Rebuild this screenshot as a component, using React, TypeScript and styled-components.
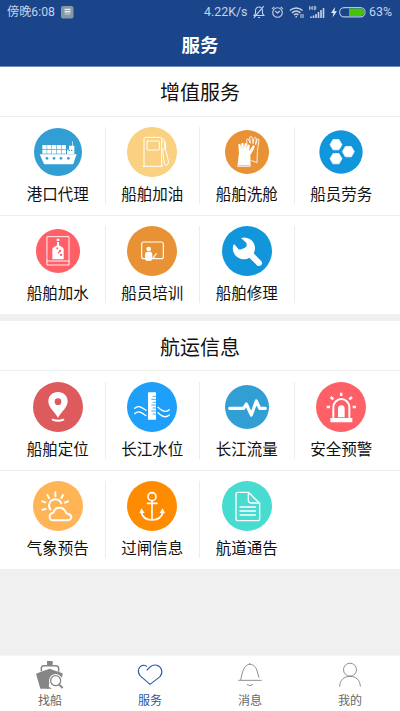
import React from 'react';
import styled, { createGlobalStyle } from 'styled-components';

const GlobalStyle = createGlobalStyle`
  * { box-sizing: border-box; }
  body {
    margin: 0;
    background: #f0f0f0;
    font-family: Roboto, "Noto Sans CJK SC", sans-serif;
  }
`;

const Screen = styled.div`
  display: flex;
  flex-direction: column;
  width: 400px;
  height: 711px;
  background: #f0f0f0;
  overflow: hidden;
`;

const Header = styled.header`
  height: 67px;
  flex: none;
  background: #1b458a;
  border-bottom: 1px solid #6e8bb8;
  color: #fff;
`;

const StatusBar = styled.div`
  height: 24px;
  display: flex;
  align-items: center;
  justify-content: space-between;
  padding: 0 7px;
  font-size: 12px;
  line-height: 24px;
  color: #c5d2e8;
`;

const StatusGroup = styled.div`
  display: flex;
  align-items: center;
  white-space: nowrap;
`;

const Clock = styled.span`
  font-size: 12.2px;
  margin-right: 6px;
`;

const Speed = styled.span`
  width: 43px;
  margin-right: 6px;
  font-size: 12.4px;
`;

const Percent = styled.span`
  width: 24px;
  font-size: 12.4px;
`;

const StatusIcon = styled.svg<{ $w: number; $gap: number }>`
  width: ${p => p.$w}px;
  height: 14px;
  margin-right: ${p => p.$gap}px;
  flex: none;
`;

const Title = styled.h1`
  margin: 0;
  height: 42px;
  line-height: 44px;
  text-align: center;
  font-size: 18.5px;
  font-weight: 700;
`;

const Section = styled.section`
  flex: none;
  margin-bottom: 7px;
  background: #fff;
`;

const SectionTitle = styled.h2<{ $leading: number }>`
  margin: 0;
  height: 50px;
  line-height: ${p => p.$leading}px;
  border-bottom: 1px solid #eeeeee;
  text-align: center;
  font-size: 20px;
  font-weight: 400;
  color: #111;
`;

const Row = styled.div<{ $top: number }>`
  display: grid;
  grid-template-columns: repeat(4, 94.5px);
  height: ${p => p.$top + 88}px;
  padding: ${p => p.$top}px 11px 0;
  & + & {
    height: 99px;
    border-top: 1px solid #eeeeee;
  }
`;

const Cell = styled.div<{ $line: boolean }>`
  display: flex;
  flex-direction: column;
  align-items: center;
  height: 77px;
  border-right: 1px solid ${p => (p.$line ? '#ececec' : 'transparent')};
`;

const CellIcon = styled.svg`
  width: 50px;
  height: 50px;
  flex: none;
`;

const CellLabel = styled.span`
  margin-top: 7px;
  font-size: 15.5px;
  line-height: 23px;
  white-space: nowrap;
  color: #111;
`;

const TabBar = styled.nav`
  display: grid;
  grid-template-columns: repeat(4, 1fr);
  height: 56px;
  margin-top: auto;
  flex: none;
  background: #fff;
  border-top: 1px solid #f5f5f5;
`;

const Tab = styled.div<{ $active: boolean }>`
  display: flex;
  flex-direction: column;
  align-items: center;
  padding-top: 4px;
  font-size: 12px;
  line-height: 18px;
  color: ${p => (p.$active ? '#2d589f' : '#666')};
`;

const TabIcon = styled.svg`
  width: 30px;
  height: 30px;
  margin-bottom: 2px;
`;

type Item = { label: string; color: string; r: number; art: React.ReactNode };

const hexagon = (cx: number, cy: number, r: number) =>
  [0, 60, 120, 180, 240, 300]
    .map(a => `${cx + r * Math.cos((a * Math.PI) / 180)},${cy + r * Math.sin((a * Math.PI) / 180)}`)
    .join(' ');

const line = { fill: 'none', stroke: '#fff', strokeLinecap: 'round', strokeLinejoin: 'round' } as const;

const services: Item[][] = [
  [
    {
      label: '港口代理', color: '#319fd3', r: 72,
      art: (
        <g fill="#fff">
          {[0, 1, 2, 3, 4].map(i => (
            <g key={i}>
              <rect x={28 + i * 14.5} y="54" width="13" height="12" />
              <rect x={28 + i * 14.5} y="68" width="13" height="12" />
            </g>
          ))}
          <path d="M117 43h2v13h5v25h-22V68h6V56h9z" />
          <path d="M20 82h111l-8 22q-1 8-5 8H36q-4 0-6-8z" />
          <g fill="#319fd3">
            <path d="M107 68h4v4h-4zM114 68h4v4h-4z" />
            {[42, 63, 84, 106].map(x => <circle key={x} cx={x} cy="94" r="4" />)}
          </g>
        </g>
      ),
    },
    {
      label: '船舶加油', color: '#fad081', r: 75,
      art: (
        <g {...line} strokeWidth="3">
          <path d="M51 117V35q0-4 4-4h45q4 0 4 4v82M48 118h58" />
          <rect x="60" y="42" width="37" height="27" rx="2" />
          <path d="M104 33q10 5 12 14v21l8 34q1 13-7 13-6 0-6-10l-4-40M104 42l8 5v20" />
        </g>
      ),
    },
    {
      label: '船舶洗舱', color: '#e89235', r: 66,
      art: (
        <g>
          <path {...line} strokeWidth="2.6" d="M89 101l16 6 1-33 5-36q-4-5-6 0l-4 15 2-19q-4-6-7 0l-3 16-3-20q-5-4-7 0l2 19-6-13q-5-2-5 4l1 13" />
          <path fill="#fff" d="M46 119l5-41-2-25q3-5 7 0l2 14V50q4-5 7 0v17l3-17q4-4 7 0l-2 17 4-14q5-2 6 2l-1 17 10-16q5-3 6 1 0 8-13 27l1 35z" />
          <path fill="none" stroke="#e89235" strokeWidth="1.6" d="M48 115l38 1" />
        </g>
      ),
    },
    {
      label: '船员劳务', color: '#1296db', r: 65,
      art: (
        <g fill="#fff" stroke="#fff" strokeWidth="2" strokeLinejoin="round">
          <polygon points={hexagon(60, 53, 18)} />
          <polygon points={hexagon(97, 74, 18)} />
          <polygon points={hexagon(60, 95, 18)} />
        </g>
      ),
    },
  ],
  [
    {
      label: '船舶加水', color: '#ff5f66', r: 66,
      art: (
        <g>
          <path {...line} strokeWidth="2.8" d="M43 32h65v85H43zM43 105h65" />
          <path fill="#fff" d="M71 38h8v7h-8zM72 48h6v9q2 3 9 6 5 2 5 7v30H58V70q0-5 5-7 7-3 9-6z" />
          <g fill="#ff5f66">
            <circle cx="73" cy="67" r="3" />
            <circle cx="81" cy="75" r="3.5" />
            <circle cx="77" cy="80" r="2.5" />
            <circle cx="84" cy="87" r="3.5" />
          </g>
        </g>
      ),
    },
    {
      label: '船员培训', color: '#e89235', r: 75,
      art: (
        <g>
          <path {...line} strokeWidth="3.4" d="M54 98h-4q-6 0-6-6V54q0-6 6-6h53q6 0 6 6v38q0 6-6 6H77L88 83" />
          <circle cx="65" cy="69" r="7" fill="#fff" />
          <path fill="#fff" d="M60 77h11q5 2 5 9v14q-1 4-4 4H58q-4-1-4-6V85q1-7 6-8z" />
        </g>
      ),
    },
    {
      label: '船舶修理', color: '#1296db', r: 75,
      art: (
        <path fill="#fff" d="M37 55l12 14q4 3 9 1l11-5q4-2 5-7 1-5-3-9L57 36q17-5 31 6 10 9 11 24 0 9-4 16l23 24q5 6 0 11t-12 2L82 95q-7 5-17 5-16-1-26-13-10-14-5-30z" />
      ),
    },
  ],
];

const shipping: Item[][] = [
  [
    {
      label: '船舶定位', color: '#dd5b5c', r: 75,
      art: (
        <g>
          <path fill="#fff" fillRule="evenodd" d="M75 30c17 0 29 12 29 28 0 18-18 31-29 49-11-18-29-31-29-49 0-16 12-28 29-28zM75 49a10 10 0 100 20 10 10 0 000-20z" />
          <path {...line} strokeWidth="6" d="M59 113q16 7 32 0" />
        </g>
      ),
    },
    {
      label: '长江水位', color: '#1e9ffa', r: 75,
      art: (
        <g>
          <rect x="63" y="31" width="24" height="82" rx="1" fill="#fff" />
          <path stroke="#1e9ffa" strokeWidth="2.5" d="M77 43h10M73 52h14M77 61h10M73 69h14M77 78h10M73 87h14M77 96h10" />
          <path {...line} strokeWidth="4" d="M23 79c11-11 22-3 34 6M23 95c11-11 22-3 34 6M93 76c10 10 22 18 34 7M93 92c10 10 22 18 34 7" />
        </g>
      ),
    },
    {
      label: '长江流量', color: '#319fd3', r: 66,
      art: <path {...line} strokeWidth="9.5" d="M23 79h42l8-13 15 33 15-42 10 22h17" />,
    },
    {
      label: '安全预警', color: '#ff5f66', r: 75,
      art: (
        <g>
          <path {...line} strokeWidth="6" d="M52 106V76a24 25 0 0148 0v30" />
          <path fill="#fff" d="M43 108h66v13H43zM66 106V80a10 10 0 0120 0v26z" />
          <path fill="none" stroke="#fff" strokeWidth="7.500" d="M75.500 32v10M32 75h10M110 75h10M44 45l8 7M108 45l-8 7" />
        </g>
      ),
    },
  ],
  [
    {
      label: '气象预告', color: '#ffb556', r: 75,
      art: (
        <g>
          <path {...line} strokeWidth="6" d="M52 85a19 19 0 1133-18M67 34v12M43 42l5 9M90 42l-5 9M28 61l9 3M105 61l-9 4M28 86l10-2" />
          <path {...line} strokeWidth="6" d="M61 118q-11-1-11-11 0-10 11-12 5-15 18-15 14 0 19 13 2 5 6 5 10 2 11 10-1 9-10 10z" />
        </g>
      ),
    },
    {
      label: '过闸信息', color: '#ff8b00', r: 75,
      art: (
        <g>
          <circle {...line} strokeWidth="5" cx="75" cy="47" r="12" />
          <path {...line} strokeWidth="5" d="M75 60v57M61 67h29M43 93q4 23 32 24 28-1 33-24" />
          <path fill="#fff" d="M43 82l10 14-16 1zM107 82l7 15-16-1z" />
        </g>
      ),
    },
    {
      label: '航道通告', color: '#48dbd0', r: 75,
      art: (
        <path {...line} strokeWidth="4" d="M48 34h31l34 33v46q0 6-6 6H48q-6 0-6-6V40q0-6 6-6zM79 34v24q0 8 8 8h25M54 78h46M54 90h46M54 102h46" />
      ),
    },
  ],
];

const tabs = [
  {
    label: '找船',
    art: (
      <g>
        <path fill="none" stroke="#868686" strokeWidth="4.500" d="M19 34V24q1-7 7-7h36q8 0 9 7v11" />
        <path fill="#868686" d="M36 3h17v13H36zM3 41l19-7 22-8 21 8 18 6-1 9-4 7H45L40 86H16Q10 65 3 41z" />
        <circle cx="62" cy="62" r="20" fill="#fff" />
        <path fill="#868686" d="M38 74q4 9 13 12H36z" />
        <circle cx="62" cy="62" r="15" fill="none" stroke="#868686" strokeWidth="4" />
        <path stroke="#868686" strokeWidth="6" d="M72 73l11 11" />
      </g>
    ),
  },
  {
    label: '服务',
    art: <path fill="none" stroke="#315ba3" strokeWidth="3.3" strokeLinecap="round" d="M36 30l9-9q9-8 21-5c15 5 19 22 9 34L45 73 15 47C5 33 11 19 24 16q6-1 11 3" />,
  },
  {
    label: '消息',
    art: <path fill="none" stroke="#868686" strokeWidth="2.8" d="M44 9v5M10 61h70M17 60l4-18c5-19 12-29 24-29 11 0 19 9 22 23l5 17M36 73q9 8 18 0" />,
  },
  {
    label: '我的',
    art: (
      <g fill="none" stroke="#868686" strokeWidth="2.8">
        <circle cx="45" cy="29" r="19.500" />
        <path d="M14 80c0-19 13-31 31-31s31 12 31 31" />
      </g>
    ),
  },
];

type SectionProps = { title: string; rows: Item[][]; lineCounts: number[]; leading: number; firstTop: number };

function ServiceSection({ title, rows, lineCounts, leading, firstTop }: SectionProps) {
  return (
    <Section>
      <SectionTitle $leading={leading}>{title}</SectionTitle>
      {rows.map((row, i) => (
        <Row key={i} $top={i === 0 ? firstTop : 10}>
          {row.map((item, j) => (
            <Cell key={item.label} $line={j < lineCounts[i]}>
              <CellIcon viewBox="0 0 150 150">
                <circle cx="75" cy="75" r={item.r} fill={item.color} />
                {item.art}
              </CellIcon>
              <CellLabel>{item.label}</CellLabel>
            </Cell>
          ))}
        </Row>
      ))}
    </Section>
  );
}

export default function App() {
  return (
    <Screen>
      <GlobalStyle />
      <Header>
        <StatusBar>
          <StatusGroup>
            <Clock>傍晚6:08</Clock>
            <StatusIcon $w={13} $gap={0} viewBox="0 0 13 14">
              <rect y="1" width="12.500" height="12.500" rx="2" fill="#8499a5" />
              <path stroke="#e4eaf0" strokeWidth="1.4" d="M3.500 4.500h6M3.500 6.800h6" />
              <path stroke="#b5c2cc" strokeWidth="1.4" d="M3.500 9h6" />
            </StatusIcon>
          </StatusGroup>
          <StatusGroup>
            <Speed>4.22K/s</Speed>
            <StatusIcon $w={12} $gap={6} viewBox="0 0 12 14" fill="none" stroke="#c5d2e8" strokeWidth="1.1">
              <path d="M1 10.500h10L9.500 8.500V5.500Q9 2 6 2T2.500 5.500v3zM5 12.500h2M10.800 1.200L.8 12.800" />
            </StatusIcon>
            <StatusIcon $w={13} $gap={5} viewBox="0 0 13 14" fill="none" stroke="#c5d2e8" strokeWidth="1.1">
              <circle cx="6.500" cy="7.500" r="4.800" />
              <path d="M4.200 6l2.300 2 2.300-2M1 3.800l2.300-2M12 3.800l-2.300-2" />
            </StatusIcon>
            <StatusIcon $w={15} $gap={5} viewBox="0 0 15 14" fill="none" stroke="#c5d2e8" strokeWidth="1.5">
              <path d="M.8 5.500q6.400-5 12.800 0M3 7.800q4.200-3.400 8.400 0M5 10q2.200-1.800 4.400 0M6.500 11.800h1.500" />
              <path strokeWidth="1" d="M12 9v4M14 9v4" />
            </StatusIcon>
            <StatusIcon $w={16} $gap={6} viewBox="0 0 16 14" fill="none" stroke="#c5d2e8" strokeWidth="1.6">
              <path d="M2 13v-1.500M4.500 13v-2.500M7 13V9M9.500 13V7M12 13V5M14.500 13V3" />
              <path strokeWidth=".9" d="M.7 1v4M3.200 1v4M.7 3h2.500M5.200 1.400v3.200h1.200q1.200-1.600 0-3.200z" />
            </StatusIcon>
            <StatusIcon $w={6} $gap={2} viewBox="0 0 6 14">
              <path fill="#dfe7f3" d="M4 2L0 8h2.500L1.500 12.500 6 6.300H3.500z" />
            </StatusIcon>
            <StatusIcon $w={27} $gap={3} viewBox="0 0 27 14">
              <rect x=".6" y="2.600" width="25.500" height="9.300" rx="4.600" fill="none" stroke="#b3c3de" strokeWidth="1.100" />
              <path fill="#46c20a" d="M10 3.500h12q3.300.7 3.300 3.800T22 11H10z" />
            </StatusIcon>
            <Percent>63%</Percent>
          </StatusGroup>
        </StatusBar>
        <Title>服务</Title>
      </Header>
      <ServiceSection title="增值服务" rows={services} lineCounts={[3, 3]} leading={53} firstTop={10} />
      <ServiceSection title="航运信息" rows={shipping} lineCounts={[3, 2]} leading={55} firstTop={11} />
      <TabBar>
        {tabs.map(tab => (
          <Tab key={tab.label} $active={tab.label === '服务'}>
            <TabIcon viewBox="0 0 90 90">{tab.art}</TabIcon>
            <span>{tab.label}</span>
          </Tab>
        ))}
      </TabBar>
    </Screen>
  );
}
